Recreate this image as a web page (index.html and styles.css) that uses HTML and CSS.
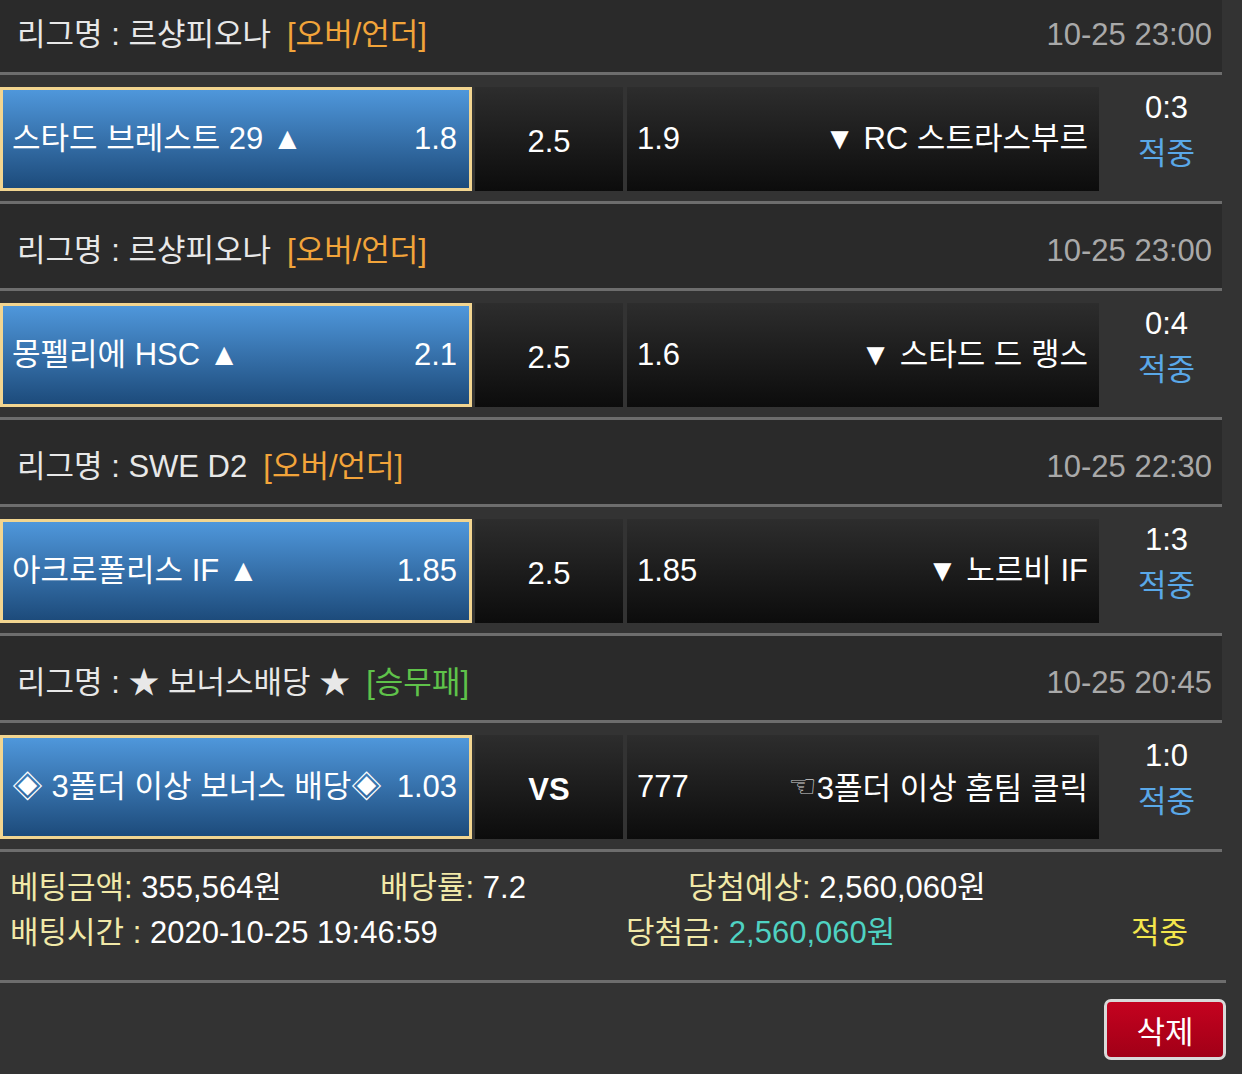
FILE: index.html
```html
<!DOCTYPE html>
<html lang="ko">
<head>
  <meta charset="UTF-8" />
  <meta name="viewport" content="width=device-width, initial-scale=1.0"/>
  <title>배팅내역</title>
  <link rel="stylesheet" href="styles.css">
</head>
<body>

  <div class="slip">

    <!-- match 1 -->
    <div class="match">
      <div class="league">
        <span class="league-name">리그명 : 르샹피오나</span>
        <span class="game-type ou">[오버/언더]</span>
        <span class="kickoff">10-25 23:00</span>
      </div>
      <div class="bet-row">
        <div class="pick home selected">
          <span class="team">스타드 브레스트 29 ▲</span>
          <span class="odd">1.8</span>
        </div>
        <div class="pick mid">2.5</div>
        <div class="pick away">
          <span class="odd">1.9</span>
          <span class="team">▼ RC 스트라스부르</span>
        </div>
        <div class="result">
          <span class="score">0:3</span>
          <span class="hit">적중</span>
        </div>
      </div>
    </div>

    <!-- match 2 -->
    <div class="match">
      <div class="league">
        <span class="league-name">리그명 : 르샹피오나</span>
        <span class="game-type ou">[오버/언더]</span>
        <span class="kickoff">10-25 23:00</span>
      </div>
      <div class="bet-row">
        <div class="pick home selected">
          <span class="team">몽펠리에 HSC ▲</span>
          <span class="odd">2.1</span>
        </div>
        <div class="pick mid">2.5</div>
        <div class="pick away">
          <span class="odd">1.6</span>
          <span class="team">▼ 스타드 드 랭스</span>
        </div>
        <div class="result">
          <span class="score">0:4</span>
          <span class="hit">적중</span>
        </div>
      </div>
    </div>

    <!-- match 3 -->
    <div class="match">
      <div class="league">
        <span class="league-name">리그명 : SWE D2</span>
        <span class="game-type ou">[오버/언더]</span>
        <span class="kickoff">10-25 22:30</span>
      </div>
      <div class="bet-row">
        <div class="pick home selected">
          <span class="team">아크로폴리스 IF ▲</span>
          <span class="odd">1.85</span>
        </div>
        <div class="pick mid">2.5</div>
        <div class="pick away">
          <span class="odd">1.85</span>
          <span class="team">▼ 노르비 IF</span>
        </div>
        <div class="result">
          <span class="score">1:3</span>
          <span class="hit">적중</span>
        </div>
      </div>
    </div>

    <!-- match 4 : bonus -->
    <div class="match">
      <div class="league">
        <span class="league-name">리그명 : ★ 보너스배당 ★</span>
        <span class="game-type wdl">[승무패]</span>
        <span class="kickoff">10-25 20:45</span>
      </div>
      <div class="bet-row">
        <div class="pick home selected">
          <span class="team">◈ 3폴더 이상 보너스 배당◈</span>
          <span class="odd">1.03</span>
        </div>
        <div class="pick mid vs">VS</div>
        <div class="pick away">
          <span class="odd">777</span>
          <span class="team"><span class="hand">☜</span>3폴더 이상 홈팀 클릭</span>
        </div>
        <div class="result">
          <span class="score">1:0</span>
          <span class="hit">적중</span>
        </div>
      </div>
    </div>

    <div class="summary">
      <div class="sum-line">
        <span class="sum-cell w1"><span class="label">베팅금액:</span> 355,564원</span>
        <span class="sum-cell w2"><span class="label">배당률:</span> 7.2</span>
        <span class="sum-cell"><span class="label">당첨예상:</span> 2,560,060원</span>
      </div>
      <div class="sum-line">
        <span class="sum-cell w3"><span class="label">배팅시간 :</span> 2020-10-25 19:46:59</span>
        <span class="sum-cell w4"><span class="label">당첨금:</span> <span class="won">2,560,060원</span></span>
        <span class="sum-cell status">적중</span>
      </div>
    </div>

    <div class="actions">
      <button class="del-button">삭제</button>
    </div>

  </div>

</body>
</html>
```

FILE: styles.css
```css
*, *::before, *::after {
  box-sizing: border-box;
}

body, html {
  margin: 0;
  padding: 0;
  width: 100%;
  height: 100%;
  background: #333333;
  font-family: 'Liberation Sans', 'Noto Sans CJK KR', sans-serif;
  font-size: 31px;
  color: #fff;
  overflow: hidden;
}

.slip {
  width: 1222px;
  margin-top: -12px;
}

/* league header */
.league {
  display: flex;
  align-items: center;
  height: 87px;
  padding: 10px 10px 0 17px;
  line-height: 40px;
  background: #2a2a2a;
  border-bottom: 3px solid #6d6d6d;
  white-space: nowrap;
}

.league-name {
  color: #e8e8e8;
}

.game-type {
  margin-left: 16px;
}

.game-type.ou {
  color: #f2a43a;
}

.game-type.wdl {
  color: #5fc24a;
}

.kickoff {
  margin-left: auto;
  color: #a9a9a9;
}

/* bet row */
.bet-row {
  display: flex;
  padding: 12px 0 10px;
  border-bottom: 3px solid #6d6d6d;
}

.match:last-of-type .bet-row {
  border-bottom: none;
}

.pick {
  height: 104px;
  display: flex;
  align-items: center;
  line-height: 40px;
  white-space: nowrap;
  background: linear-gradient(#2d2d2d, #0c0c0c);
}

.pick.home {
  width: 472px;
  padding: 0 12px 0 9px;
  justify-content: space-between;
}

.pick.selected {
  background: linear-gradient(#4f97db, #1d4b7b);
  border: 3px solid #f2d590;
}

.pick.mid {
  width: 148px;
  margin-left: 3px;
  padding-top: 6px;
  justify-content: center;
}

.pick.vs {
  font-weight: 700;
}

.pick.away {
  width: 472px;
  margin-left: 4px;
  padding: 0 11px 0 10px;
  justify-content: space-between;
}

.hand {
  font-family: 'DejaVu Sans', sans-serif;
  font-size: 32px;
  vertical-align: 2px;
  color: #cfcfcf;
}

.result {
  flex: 1;
  display: flex;
  flex-direction: column;
  align-items: center;
  padding-left: 12px;
  margin-top: -2px;
  line-height: 46px;
}

.hit {
  color: #5aa8e8;
}

/* totals */
.summary {
  padding: 13px 0 25px 10px;
}

.sum-line {
  display: flex;
  line-height: 45px;
  white-space: nowrap;
}

.label {
  color: #f1e9a8;
}

.sum-cell.w1 {
  width: 370px;
}

.sum-cell.w2 {
  width: 308px;
}

.sum-cell.w3 {
  width: 616px;
}

.sum-cell.w4 {
  width: 505px;
}

.won {
  color: #4fd2c2;
}

.status {
  color: #f3e64c;
}

.actions {
  display: flex;
  justify-content: flex-end;
  border-top: 3px solid #6d6d6d;
  padding: 16px 0 14px;
  margin-right: -4px;
}

.del-button {
  width: 122px;
  height: 61px;
  background: linear-gradient(#c4021f, #a10017);
  color: #fff;
  font-family: 'Liberation Sans', 'Noto Sans CJK KR', sans-serif;
  font-size: 31px;
  border: 3px solid #d9d9d9;
  border-radius: 7px;
  cursor: pointer;
}
```
